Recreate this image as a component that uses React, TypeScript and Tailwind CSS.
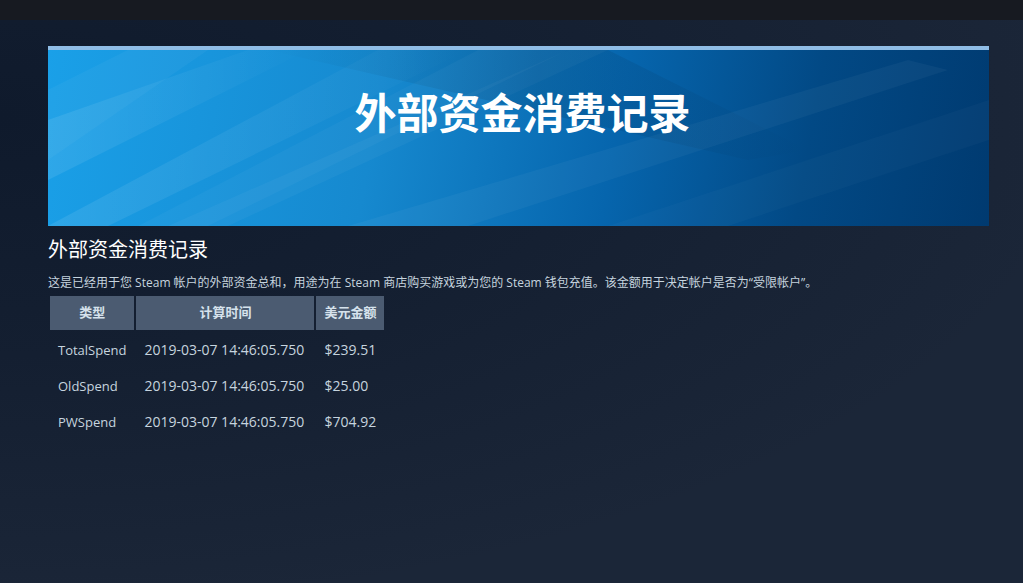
import React from "react";

const rows = [
  ["TotalSpend", "2019-03-07 14:46:05.750", "$239.51"],
  ["OldSpend", "2019-03-07 14:46:05.750", "$25.00"],
  ["PWSpend", "2019-03-07 14:46:05.750", "$704.92"],
];

function BannerStreaks() {
  return (
    <svg className="absolute inset-0 h-full w-full" viewBox="0 0 941 176" preserveAspectRatio="none">
      <defs>
        <linearGradient id="fade" x1="0" y1="0" x2="1" y2="0">
          <stop offset="0" stopColor="#ffffff" stopOpacity="0.09" />
          <stop offset="0.6" stopColor="#ffffff" stopOpacity="0.04" />
          <stop offset="1" stopColor="#ffffff" stopOpacity="0" />
        </linearGradient>
        <linearGradient id="dark" x1="0" y1="0" x2="1" y2="0">
          <stop offset="0" stopColor="#000814" stopOpacity="0" />
          <stop offset="0.5" stopColor="#000814" stopOpacity="0.12" />
          <stop offset="1" stopColor="#000814" stopOpacity="0" />
        </linearGradient>
      </defs>
      <polygon points="0,70 200,0 260,0 0,130" fill="url(#fade)" />
      <polygon points="0,176 60,176 420,0 330,0" fill="url(#fade)" />
      <polygon points="120,176 180,176 560,0 520,0" fill="#ffffff" fillOpacity="0.035" />
      <polygon points="0,110 0,40 80,0 160,0" fill="#ffffff" fillOpacity="0.035" />
      <polygon points="300,176 420,176 900,20 860,10" fill="#ffffff" fillOpacity="0.04" />
      <polygon points="220,0 560,0 760,100 700,110" fill="url(#dark)" />
      <polygon points="560,176 680,176 941,90 941,50" fill="#ffffff" fillOpacity="0.025" />
      <polygon points="430,0 520,0 160,176 90,176" fill="#ffffff" fillOpacity="0.03" />
    </svg>
  );
}

export default function App() {
  return (
    <div
      className="min-h-[583px] w-full bg-[#1b2638] bg-[radial-gradient(ellipse_at_0%_20%,#0f1a2c_0%,rgba(15,26,44,0.6)_35%,rgba(27,38,56,0)_75%)]"
      style={{ fontFamily: '"Open Sans", Arial, "Noto Sans CJK SC", sans-serif' }}
    >
      <div className="h-[20px] bg-[#171a21]" />
      <div className="px-[48px] pr-[34px] pt-[26px]">
        <div className="border-t-[4px] border-[#8fbde6]">
          <div className="relative flex h-[176px] items-start justify-center overflow-hidden bg-[linear-gradient(100deg,#1aa0e8_0%,#1689cf_35%,#0665ad_60%,#024985_80%,#003a70_100%)] pt-[40px]">
            <BannerStreaks />
            <h1
              className="relative pl-[8px] text-[42px] font-bold leading-none text-white"
              style={{ fontFamily: '"Noto Sans CJK SC", sans-serif' }}
            >
              外部资金消费记录
            </h1>
          </div>
        </div>
        <h2
          className="mt-[10px] text-[20px] leading-[26px] text-white"
          style={{ fontFamily: '"Noto Sans CJK SC", sans-serif' }}
        >
          外部资金消费记录
        </h2>
        <p className="mt-[13px] text-[12px] leading-[16px] text-[#c6d4df]">
          这是已经用于您 Steam 帐户的外部资金总和，用途为在 Steam 商店购买游戏或为您的 Steam 钱包充值。该金额用于决定帐户是否为“受限帐户”。
        </p>
        <table className="mt-[3px] border-separate border-spacing-[2px] text-[13px] text-[#c6d4df]">
          <thead>
            <tr>
              <th className="h-[34px] w-[84px] bg-[#4b5b71] px-[8px] font-bold text-[#d6e2ec]">类型</th>
              <th className="h-[34px] w-[178px] bg-[#4b5b71] px-[8px] font-bold text-[#d6e2ec]">计算时间</th>
              <th className="h-[34px] w-[68px] bg-[#4b5b71] px-[8px] font-bold text-[#d6e2ec]">美元金额</th>
            </tr>
          </thead>
          <tbody>
            {rows.map((r) => (
              <tr key={r[0]}>
                <td className="h-[34px] whitespace-nowrap px-[8px] pt-[2px] text-left text-[14px] leading-[20px]">
                  <span className="text-[13px]">{r[0]}</span>
                </td>
                <td className="h-[34px] whitespace-nowrap px-[8px] pt-[2px] text-left text-[14px] leading-[20px]">{r[1]}</td>
                <td className="h-[34px] whitespace-nowrap px-[8px] pt-[2px] text-left text-[14px] leading-[20px]">{r[2]}</td>
              </tr>
            ))}
          </tbody>
        </table>
      </div>
    </div>
  );
}
